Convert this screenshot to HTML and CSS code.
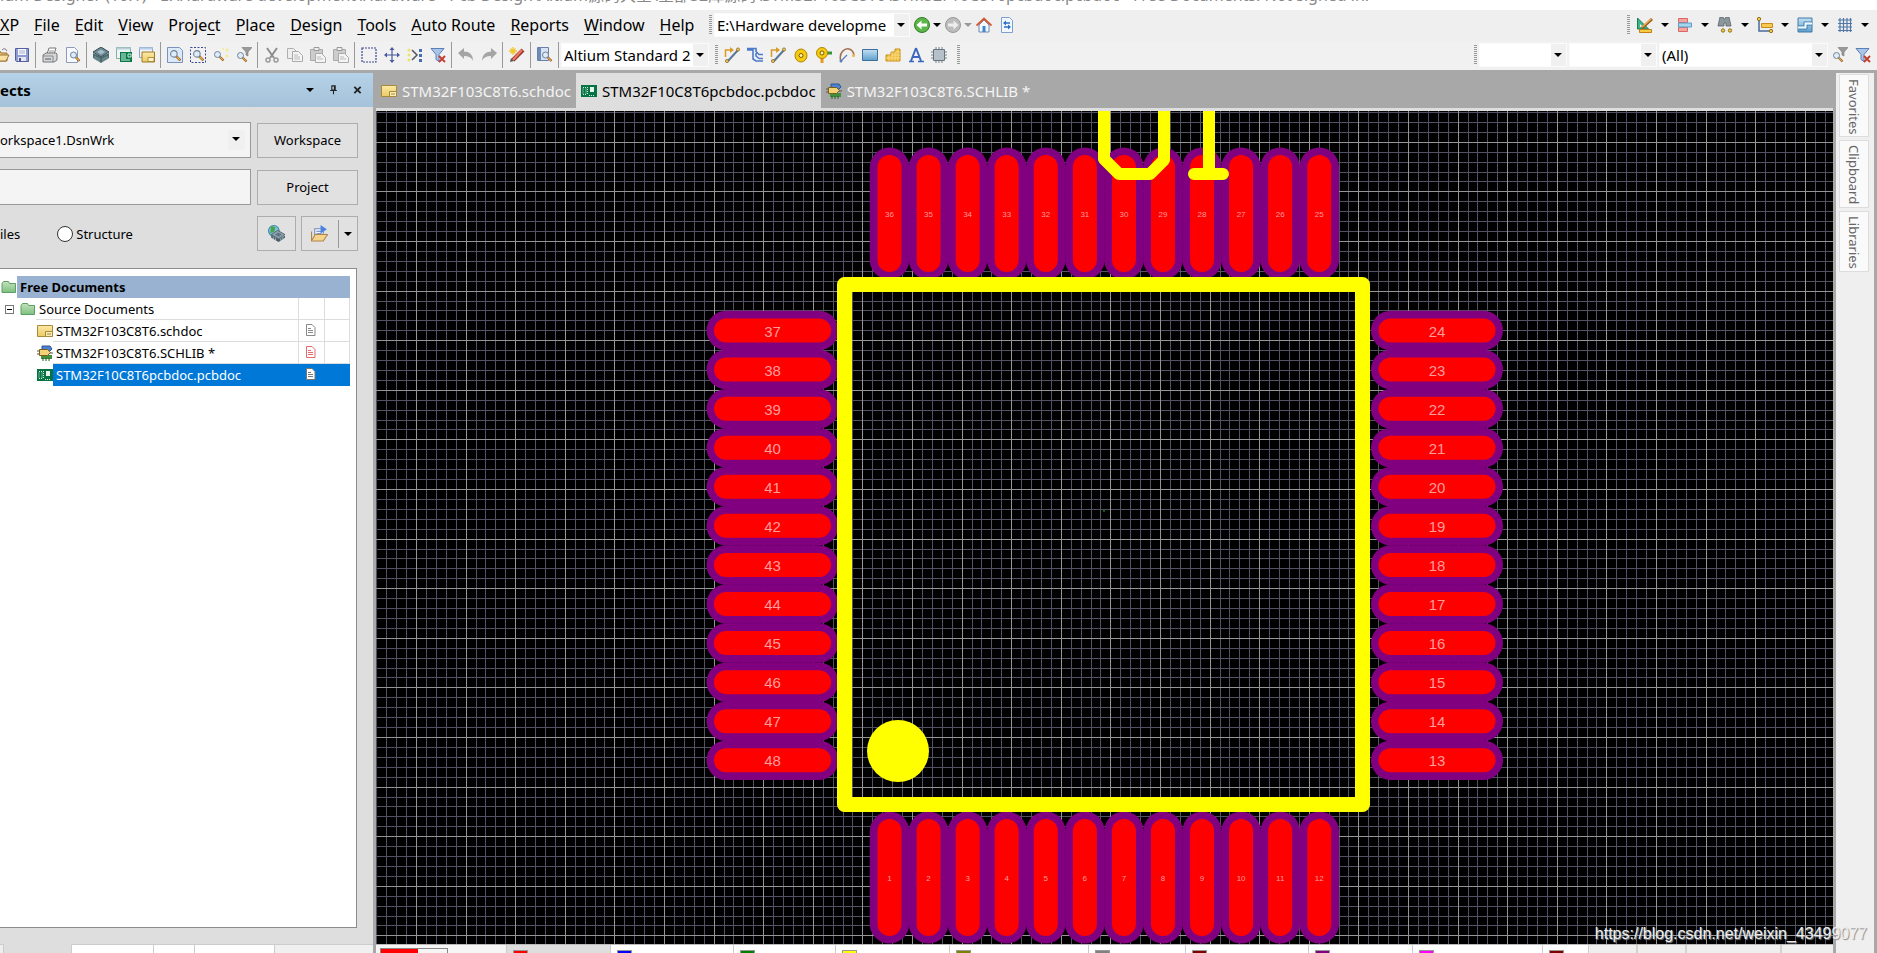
FILE: index.html
```html
<!DOCTYPE html>
<html lang="en">
<head>
<meta charset="utf-8">
<title>Altium Designer</title>
<link rel="stylesheet" href="styles.css">
</head>
<body>
<svg class="defs" aria-hidden="true">
  <defs>
    <linearGradient id="gy" x1="0" y1="0" x2="0" y2="1"><stop offset="0" stop-color="#fbe9a6"/><stop offset="1" stop-color="#eccb62"/></linearGradient>
    <linearGradient id="gb" x1="0" y1="0" x2="0" y2="1"><stop offset="0" stop-color="#c3e0f2"/><stop offset="1" stop-color="#5d9fcc"/></linearGradient>
    <linearGradient id="gg" x1="0" y1="0" x2="0" y2="1"><stop offset="0" stop-color="#c3e3bd"/><stop offset="1" stop-color="#7dc080"/></linearGradient>
  </defs>
  <symbol id="lens" viewBox="0 0 16 16"><path d="M9 9l5 5" stroke="#8a5a1e" stroke-width="3"/><path d="M9.500 9.500l4 4" stroke="#f2b04c" stroke-width="1.500"/><circle cx="6" cy="6" r="4" fill="#dcecfa" stroke="#6f7f92" stroke-width="1.300"/></symbol>
  <symbol id="open" viewBox="0 0 16 16"><path d="M1 14V4h5l1 2h6v8z" fill="#e9c374" stroke="#9c7436"/><path d="M1 14l3-6h11l-3 6z" fill="#fbe2a4" stroke="#9c7436"/><path d="M8 3q3-3 5 1" fill="none" stroke="#777"/></symbol>
  <symbol id="save" viewBox="0 0 16 16"><path d="M1.500 1.500h13v13h-12l-1-1z" fill="#8e9cd0" stroke="#5560a0"/><path d="M4 2h8v6H4z" fill="#f6f7fc"/><path d="M5 4h6M5 6h6" stroke="#a9b0cf"/><path d="M4 10h8v4H4z" fill="#e4e6f2"/><path d="M5 11h2v3H5z" fill="#4b558f"/></symbol>
  <symbol id="print" viewBox="0 0 16 16"><path d="M5 7l2-6h7l-2 6z" fill="#fff" stroke="#777"/><path d="M7 4h5M7 6h4" stroke="#999"/><path d="M1 8l3-2h10l1 1v6l-3 2H1z" fill="#d5d8db" stroke="#777"/><path d="M1 9h10v6" fill="none" stroke="#888"/><path d="M3 12h6" stroke="#555"/></symbol>
  <symbol id="page" viewBox="0 0 16 16"><path d="M1.500.5h8l3 3v12h-11z" fill="#f6f9ff" stroke="#8b9bb8"/></symbol>
  <symbol id="preview" viewBox="0 0 16 16"><use href="#page"/><use href="#lens" x="4" y="3" width="12" height="13"/></symbol>
  <symbol id="stack" viewBox="0 0 16 16"><path d="M0 6l8 4 8-4v5l-8 5-8-5z" fill="#4b6b70"/><path d="M2 9v4M4 10v4M6 11v4M10 11v4M12 10v4M14 9v4" stroke="#9db5b8" stroke-width=".7"/><path d="M0 5l8-5 8 5-8 5z" fill="#6c8896" stroke="#385058"/><path d="M4 5l4-2.500L12 5 8 7.500z" fill="#a6bcc6"/></symbol>
  <symbol id="pcbwin" viewBox="0 0 16 16"><path d="M.5.5h14v11H.5z" fill="#eef5f3" stroke="#8aa"/><path d="M.5.5h14v2H.5z" fill="#b7cfd8"/><path d="M4 5h12v10H4z" fill="#087a4a"/><path d="M5 7h5M5 9h5M5 11h5M12 7h3v3h-3zM5 13h9" stroke="#cfeedd" fill="none"/></symbol>
  <symbol id="schwin" viewBox="0 0 16 16"><path d="M.5.5h13v10H.5z" fill="#eef3fb" stroke="#8ba4c4"/><path d="M.5.5h13v2H.5z" fill="#b8cfe8"/><path d="M3 5h12.500v10H3z" fill="url(#gy)" stroke="#a07c28"/><path d="M9 10.500h6v4H9z" fill="#fff3c4" stroke="#a07c28" stroke-width=".8"/></symbol>
  <symbol id="zdoc" viewBox="0 0 16 16"><path d="M.5.5h12l3 3v12H.5z" fill="#dbe9fa" stroke="#7a93bb"/><use href="#lens" x="2" y="2" width="13" height="13"/></symbol>
  <symbol id="zsel" viewBox="0 0 16 16"><path d="M.5.5h15v15H.5z" fill="none" stroke="#3a4a90" stroke-dasharray="2 1.500"/><use href="#lens" x="2" y="2" width="13" height="13"/></symbol>
  <symbol id="zpts" viewBox="0 0 16 16"><use href="#lens" x="0" y="3" width="12" height="12"/><circle cx="14" cy="3" r="1.500" fill="#f5ec8a"/><circle cx="10" cy="2" r="1" fill="#f5ec8a"/><circle cx="14" cy="9" r="1.500" fill="#f5ec8a"/></symbol>
  <symbol id="zflt" viewBox="0 0 16 16"><use href="#lens" x="0" y="4" width="12" height="12"/><path d="M6 .5h10l-4 4.500v4l-2-1V5z" fill="#999" stroke="#777" stroke-width=".6"/></symbol>
  <symbol id="cut" viewBox="0 0 16 16"><path d="M3 1l7 10M13 1L6 11" stroke="#8d8d8d" stroke-width="2"/><circle cx="4" cy="13" r="2" fill="none" stroke="#999" stroke-width="1.500"/><circle cx="12" cy="13" r="2" fill="none" stroke="#999" stroke-width="1.500"/></symbol>
  <symbol id="copy" viewBox="0 0 16 16"><path d="M.5 1.500h6l3 3v7h-9z" fill="#eee" stroke="#b0b0b0"/><path d="M5.500 4.500h6l4 4v6h-10z" fill="#f4f4f4" stroke="#aaa"/><path d="M7 8h4M7 10h6M7 12h6" stroke="#bbb"/></symbol>
  <symbol id="paste" viewBox="0 0 16 16"><path d="M.5 2.500h12v11H.5z" fill="#ccc" stroke="#aaa"/><path d="M4 .5h5v3H4z" fill="#eee" stroke="#999"/><path d="M5.500 6.500h6l4 4v5h-10z" fill="#f4f4f4" stroke="#aaa"/><path d="M7 10h4M7 12h6" stroke="#bbb"/></symbol>
  <symbol id="marq" viewBox="0 0 16 16"><path d="M1 1h14v14H1z" fill="none" stroke="#3a4a90" stroke-width="1.200" stroke-dasharray="2 1"/></symbol>
  <symbol id="move" viewBox="0 0 16 16"><path d="M8 2v12M2 8h12" stroke="#46589c" stroke-width="1.200"/><path d="M8 0l2.500 3h-5zM8 16l2.500-3h-5zM0 8l3-2.500v5zM16 8l-3-2.500v5z" fill="#46589c"/></symbol>
  <symbol id="desel" viewBox="0 0 16 16"><path d="M5 3l5 5-5 5" fill="none" stroke="#555" stroke-width="1.500"/><path d="M12 2h3v3h-3zM12 7h3v3h-3zM12 12h3v3h-3z" fill="#4b6cb0"/><circle cx="2" cy="3" r="1.500" fill="#eee36a"/><circle cx="2" cy="8" r="1.500" fill="#eee36a"/><circle cx="2" cy="13" r="1.500" fill="#eee36a"/></symbol>
  <symbol id="clrf" viewBox="0 0 16 16"><path d="M1 1.500h13L9 7.500v7l-3-2v-5z" fill="#a9c6ea" stroke="#5c7fb6"/><path d="M9 9l6 6M15 9l-6 6" stroke="#c6392e" stroke-width="1.800"/></symbol>
  <symbol id="undo" viewBox="0 0 16 16"><path d="M0 6l6-5v3.500q9 0 9 9.500-2-5-9-5V12z" fill="#a5a5a5"/></symbol>
  <symbol id="redo" viewBox="0 0 16 16"><path d="M16 6l-6-5v3.500Q1 5 1 14q2-5 9-5V12z" fill="#a5a5a5"/></symbol>
  <symbol id="wand" viewBox="0 0 16 16"><path d="M4 13L14 3" stroke="#9e3328" stroke-width="4"/><path d="M4 13L13 3" stroke="#ea7d67" stroke-width="2"/><path d="M1 15l4-1-3-3z" fill="#555"/><path d="M4 0v8M0 4h8M1.500 1.500l5 5M6.500 1.500l-5 5" stroke="#f0c82e" stroke-width="1.300"/></symbol>
  <symbol id="browse" viewBox="0 0 16 16"><path d="M.5.5h11v13H.5z" fill="#d7e3f4" stroke="#6a80a8"/><path d="M1 1h3v12H1z" fill="#6f8cb8"/><use href="#lens" x="4" y="3" width="12" height="13"/></symbol>
  <symbol id="trk" viewBox="0 0 16 16"><path d="M1.500 10V3h5" fill="none" stroke="#d99a28" stroke-width="1.500"/><path d="M6 0l4 3-4 3z" fill="#d99a28"/><path d="M4 14L14 3" stroke="#5b7796" stroke-width="2"/><circle cx="14" cy="2.500" r="1.600" fill="#efc255" stroke="#75601e" stroke-width=".7"/><circle cx="3" cy="14" r="1.600" fill="#efc255" stroke="#75601e" stroke-width=".7"/></symbol>
  <symbol id="diff" viewBox="0 0 16 16"><path d="M0 3h6v9l3 2h7M0 1.500h9v3l3 3h4M9 6v3l3 2.500h4" fill="none" stroke="#4d7bca" stroke-width="1.600"/></symbol>
  <symbol id="padic" viewBox="0 0 16 16"><ellipse cx="8" cy="8.500" rx="6" ry="6.500" fill="#f5cb12" stroke="#b08600"/><circle cx="8" cy="8.500" r="2" fill="#fdf2b0" stroke="#7a5c00"/></symbol>
  <symbol id="via" viewBox="0 0 16 16"><path d="M6 9v7" stroke="#e89820" stroke-width="3"/><path d="M10 6h6" stroke="#37923a" stroke-width="3"/><circle cx="6" cy="6" r="5.500" fill="#f5cb12" stroke="#b08600"/><circle cx="6" cy="6" r="2" fill="#fff3b0" stroke="#7a5c00"/></symbol>
  <symbol id="arc" viewBox="0 0 16 16"><path d="M1.500 13C0 5 6 1 10 2q4 1 5 6" fill="none" stroke="#a56f52" stroke-width="1.500"/><path d="M2 14L8 8" stroke="#5b7ec0" stroke-width="1.300"/><circle cx="14.500" cy="8.500" r="1.500" fill="#e8b84a"/><circle cx="2" cy="14" r="1.500" fill="#5b7ec0"/></symbol>
  <symbol id="fillic" viewBox="0 0 16 16"><path d="M.5 2.500h15v11H.5z" fill="url(#gb)" stroke="#3c6f9c"/></symbol>
  <symbol id="poly" viewBox="0 0 16 16"><path d="M1 14V8h5V5h4V2h5v12z" fill="#efbf3c" stroke="#c78d14"/><path d="M1 11h14M6 8h9M10 5h5M4 8v6M7 5v9M10 5v9M13 2v12" stroke="#fbe39a" stroke-width=".7"/></symbol>
  <symbol id="txt" viewBox="0 0 16 16"><path d="M8 1l5 13M8 1L3 14M5 10h6" stroke="#3d66c0" stroke-width="2" fill="none"/><path d="M1 14.500h5M10 14.500h6" stroke="#3d66c0" stroke-width="1.500"/></symbol>
  <symbol id="comp" viewBox="0 0 16 16"><path d="M5 0v16M8 0v16M11 0v16M0 5h16M0 8h16M0 11h16" stroke="#76848e"/><path d="M2.500 2.500h11v11h-11z" fill="#b5c0c8" stroke="#66747e"/></symbol>
  <symbol id="back" viewBox="0 0 16 16"><circle cx="8" cy="8" r="7.500" fill="#5cb548" stroke="#2f7d26"/><path d="M2.500 8l5-4.500v3h5.500v3H7.500v3z" fill="#fff"/></symbol>
  <symbol id="fwd" viewBox="0 0 16 16"><circle cx="8" cy="8" r="7.500" fill="#bcbcbc" stroke="#999"/><path d="M13.500 8l-5-4.500v3H3v3h5.500v3z" fill="#eee"/></symbol>
  <symbol id="home" viewBox="0 0 16 16"><path d="M3 8v7h10V8L8 3z" fill="#f5f7fc" stroke="#6f88ac"/><path d="M6.500 9h3v6h-3z" fill="#3f86cf"/><path d="M.5 8.500L8 1.500l7.500 7" fill="none" stroke="#d6592f" stroke-width="1.800"/></symbol>
  <symbol id="sync" viewBox="0 0 16 16"><path d="M2.500.5h8l3 3v12h-11z" fill="#f3f8ff" stroke="#7ea0cc"/><path d="M5 6h6M5 10h6" stroke="#2a6fc4" stroke-width="1.500"/><path d="M7 3.500L4 6l3 2.500zM9 7.500l3 2.500-3 2.500z" fill="#2a6fc4"/></symbol>
  <symbol id="tools" viewBox="0 0 16 16"><path d="M.5 1v11h11z" fill="#40b58a" stroke="#187a56"/><path d="M3 7v3h3z" fill="#f1f1f1"/><path d="M5 11l10-9" stroke="#9b5a17" stroke-width="3"/><path d="M5 10l9-8" stroke="#efb458" stroke-width="1.500"/><path d="M2.500 12.500h12v3h-12z" fill="#f6cb48" stroke="#c27f16"/></symbol>
  <symbol id="align" viewBox="0 0 16 16"><path d="M1.500 1.500h9v4h-9zM1.500 10.500h9v4h-9z" fill="#f7a3a0" stroke="#d66866"/><path d="M1.500 6h13v4h-13z" fill="#a7d4ee" stroke="#5a9dc8"/></symbol>
  <symbol id="bino" viewBox="0 0 16 16"><path d="M3 0h3l1 2h1l1-2h3l2 9H9V6H7v3H1z" fill="#8c979d" stroke="#586268" stroke-width=".8"/><circle cx="6" cy="13.500" r="1.700" fill="#f3c945" stroke="#8e7120"/><circle cx="13" cy="13.500" r="1.700" fill="#f3c945" stroke="#8e7120"/></symbol>
  <symbol id="dim" viewBox="0 0 16 16"><path d="M2 3v11h12" fill="none" stroke="#496b9c" stroke-width="1.500"/><path d="M4.500 6.500h11v4h-11z" fill="#f7c94c" stroke="#c98a1a"/><circle cx="2" cy="2" r="1.700" fill="#f3c945" stroke="#8e7120"/><circle cx="14" cy="14" r="1.700" fill="#f3c945" stroke="#8e7120"/></symbol>
  <symbol id="room" viewBox="0 0 16 16"><path d="M1 1h14v14H1z" fill="url(#gb)" stroke="#3f7baa"/><path d="M1 9h6V5h8M1 12h9V8h5" stroke="#3f7baa" fill="none"/><path d="M1 10.500h7.500V6.500H15" stroke="#eef7fc" fill="none" stroke-width="1.800"/></symbol>
  <symbol id="gridic" viewBox="0 0 16 16"><path d="M3 1v14M6.500 1v14M10 1v14M13.500 1v14M1 3h14M1 6.500h14M1 10h14M1 13.500h14" stroke="#4f78a8" stroke-width="1.200"/></symbol>
  <symbol id="sch" viewBox="0 0 16 16"><path d="M.5 2.500h15v11H.5z" fill="url(#gy)" stroke="#a88a3c"/><path d="M8.500 8.500h7v5h-7z" fill="#fbecb4" stroke="#a88a3c"/><path d="M10 11h4" stroke="#a88a3c"/></symbol>
  <symbol id="pcb" viewBox="0 0 16 16"><path d="M0 2h16v12H0z" fill="#067345"/><path d="M2 4.500h3v7H2z" fill="none" stroke="#cfeedd" stroke-dasharray="1 1"/><path d="M6.500 4v7M8 12.500h6" stroke="#cfeedd" stroke-dasharray="1 1"/><path d="M9 4h4v5H9z" fill="#e6f5ec"/></symbol>
  <symbol id="lib" viewBox="0 0 16 16"><path d="M5 1h8l2 3-3 3H5z" fill="#4c83cc" stroke="#2b559a"/><path d="M4 10h11v4H4z" fill="#3f8f3c"/><path d="M6 13v3M9 13v3M12 13v3" stroke="#245f22"/><path d="M2.500 4.500h8l3 3-3 3h-8z" fill="#f1d276" stroke="#7a5e1a"/><path d="M0 6h2M0 9h2M13 8h3" stroke="#555"/></symbol>
  <symbol id="fold" viewBox="0 0 16 16"><path d="M1 13.500v-9l1.500-2h5l1 2h6v9z" fill="url(#gg)" stroke="#5f9e63"/></symbol>
  <symbol id="doc" viewBox="0 0 12 14"><path d="M1.500 1.500h5.500l3 3v8h-8.500z" fill="#fff" stroke="currentColor"/><path d="M3 5.500h3M3 7.500h5M3 9.500h5" stroke="currentColor"/></symbol>
  <symbol id="globe" viewBox="0 0 16 16"><circle cx="5.500" cy="5.500" r="5" fill="#7ec7df" stroke="#3a87a5"/><path d="M3 1l4 1-1 4-4 2z" fill="#4ba24a"/><path d="M3 9l6-4 7 4-6 4z" fill="#8fa3ae" stroke="#3f545e" stroke-width=".7"/><path d="M6.500 9l3-2 3.500 2-3 2z" fill="#5f7682"/><path d="M3 10v2l7 4 6-4v-2l-6 3z" fill="#4a5f69"/><path d="M5 11.500v2M7 12.500v2M12 12.500v2M14 11.500v2" stroke="#c9d5da" stroke-width=".7"/></symbol>
  <symbol id="expl" viewBox="0 0 16 16"><path d="M3.500 3.500h8v8h-8z" fill="#f3f7ff" stroke="#6f8bbd"/><path d="M5 6h5M5 8h5" stroke="#7e97c3"/><path d="M9 0l6 4-6 4z" fill="#4c83df"/><path d="M.5 6v9h11l4-6H4l-3 5" fill="#f5d48c" stroke="#b1854a"/></symbol>
  <symbol id="pin" viewBox="0 0 10 12"><path d="M3 1h4v5H3zM1 6.500h8M5 7v4" fill="none" stroke="#222" stroke-width="1.300"/><path d="M5.500 1H7v5H5.500z" fill="#222"/></symbol>
  <symbol id="x" viewBox="0 0 10 10"><path d="M1.500 1.500l7 7M8.500 1.500l-7 7" stroke="#222" stroke-width="2"/></symbol>
</svg>

<header class="titlebar"><h1 class="titlebar-text">ium Designer (16.1) - E:\Hardware development\Hardware - Pcb Design\Altium源码大全\全部32库源码\STM32F103C8T6\STM32F10C8T6pcbdoc.pcbdoc - Free Documents. Not signed in.</h1></header>

<div class="bar menu-bar">
  <nav class="menu">
    <button><u>X</u>P</button><button><u>F</u>ile</button><button><u>E</u>dit</button><button><u>V</u>iew</button><button>Proje<u>c</u>t</button><button><u>P</u>lace</button><button><u>D</u>esign</button><button><u>T</u>ools</button><button><u>A</u>uto Route</button><button><u>R</u>eports</button><button><u>W</u>indow</button><button><u>H</u>elp</button>
  </nav>
  <i class="grip"></i>
  <span class="combo combo-path"><select aria-label="Path"><option>E:\Hardware developme</option></select></span>
  <button class="tool" aria-label="Back"><svg><use href="#back"/></svg></button><button class="drop" aria-label="Back history"></button>
  <button class="tool" aria-label="Forward"><svg><use href="#fwd"/></svg></button><button class="drop drop-off" aria-label="Forward history"></button>
  <button class="tool" aria-label="Home"><svg><use href="#home"/></svg></button>
  <button class="tool" aria-label="Refresh"><svg><use href="#sync"/></svg></button>
  <div class="bar-end utility">
    <i class="grip"></i>
    <button class="tool" aria-label="Utilities"><svg><use href="#tools"/></svg></button><button class="drop" aria-label="More utilities"></button>
    <button class="tool" aria-label="Align"><svg><use href="#align"/></svg></button><button class="drop" aria-label="More alignment"></button>
    <button class="tool" aria-label="Find"><svg><use href="#bino"/></svg></button><button class="drop" aria-label="More find"></button>
    <button class="tool" aria-label="Dimension"><svg><use href="#dim"/></svg></button><button class="drop" aria-label="More dimensions"></button>
    <button class="tool" aria-label="Rooms"><svg><use href="#room"/></svg></button><button class="drop" aria-label="More rooms"></button>
    <button class="tool" aria-label="Grid"><svg><use href="#gridic"/></svg></button><button class="drop" aria-label="More grids"></button>
  </div>
</div>

<div class="bar tool-bar">
  <button class="tool tool-cut" aria-label="Open"><svg><use href="#open"/></svg></button>
  <button class="tool" aria-label="Save"><svg><use href="#save"/></svg></button><i class="sep"></i>
  <button class="tool" aria-label="Print"><svg><use href="#print"/></svg></button>
  <button class="tool" aria-label="Preview"><svg><use href="#preview"/></svg></button><i class="sep"></i>
  <button class="tool" aria-label="Devices"><svg><use href="#stack"/></svg></button>
  <button class="tool" aria-label="PCB view"><svg><use href="#pcbwin"/></svg></button>
  <button class="tool" aria-label="Schematic view"><svg><use href="#schwin"/></svg></button><i class="sep"></i>
  <button class="tool" aria-label="Fit document"><svg><use href="#zdoc"/></svg></button>
  <button class="tool" aria-label="Zoom area"><svg><use href="#zsel"/></svg></button>
  <button class="tool" aria-label="Zoom selected"><svg><use href="#zpts"/></svg></button>
  <button class="tool" aria-label="Zoom filtered"><svg><use href="#zflt"/></svg></button><i class="sep"></i>
  <button class="tool" aria-label="Cut"><svg><use href="#cut"/></svg></button>
  <button class="tool" aria-label="Copy"><svg><use href="#copy"/></svg></button>
  <button class="tool" aria-label="Paste"><svg><use href="#paste"/></svg></button>
  <button class="tool" aria-label="Rubber stamp"><svg><use href="#paste"/></svg></button><i class="sep"></i>
  <button class="tool" aria-label="Select area"><svg><use href="#marq"/></svg></button>
  <button class="tool" aria-label="Move"><svg><use href="#move"/></svg></button>
  <button class="tool" aria-label="Deselect"><svg><use href="#desel"/></svg></button>
  <button class="tool" aria-label="Clear filter"><svg><use href="#clrf"/></svg></button><i class="sep"></i>
  <button class="tool" aria-label="Undo"><svg><use href="#undo"/></svg></button>
  <button class="tool" aria-label="Redo"><svg><use href="#redo"/></svg></button><i class="sep"></i>
  <button class="tool" aria-label="Cross probe"><svg><use href="#wand"/></svg></button><i class="sep"></i>
  <button class="tool" aria-label="Browse"><svg><use href="#browse"/></svg></button><i class="sep"></i>
  <span class="combo combo-std"><select aria-label="View configuration"><option>Altium Standard 2D</option></select></span>
  <i class="grip"></i>
  <button class="tool" aria-label="Route"><svg><use href="#trk"/></svg></button>
  <button class="tool" aria-label="Differential pair"><svg><use href="#diff"/></svg></button>
  <button class="tool" aria-label="Multi route"><svg><use href="#trk"/></svg></button>
  <button class="tool" aria-label="Pad"><svg><use href="#padic"/></svg></button>
  <button class="tool" aria-label="Via"><svg><use href="#via"/></svg></button>
  <button class="tool" aria-label="Arc"><svg><use href="#arc"/></svg></button>
  <button class="tool" aria-label="Fill"><svg><use href="#fillic"/></svg></button>
  <button class="tool" aria-label="Polygon"><svg><use href="#poly"/></svg></button>
  <button class="tool" aria-label="String"><svg><use href="#txt"/></svg></button>
  <button class="tool" aria-label="Component"><svg><use href="#comp"/></svg></button>
  <i class="grip grip-last"></i>
  <div class="bar-end filters">
    <i class="grip"></i>
    <span class="combo combo-small"><select aria-label="Net"><option></option></select></span>
    <span class="combo combo-small"><select aria-label="Part"><option></option></select></span>
    <span class="combo combo-all"><select aria-label="Filter"><option>(All)</option></select></span>
    <button class="tool" aria-label="Apply filter"><svg><use href="#zflt"/></svg></button>
    <button class="tool" aria-label="Clear"><svg><use href="#clrf"/></svg></button>
  </div>
</div>

<div class="work">
  <aside class="panel">
    <div class="panel-head"><h2>ects</h2>
      <button class="drop" aria-label="Panel menu"></button>
      <button class="head-btn" aria-label="Pin"><svg class="pin"><use href="#pin"/></svg></button>
      <button class="head-btn" aria-label="Close"><svg class="close"><use href="#x"/></svg></button>
    </div>
    <div class="panel-body">
      <div class="form">
        <span class="combo combo-ws"><select aria-label="Workspace file"><option>orkspace1.DsnWrk</option></select></span>
        <button class="push">Workspace</button>
        <input class="field" type="text" aria-label="Project file">
        <button class="push">Project</button>
        <div class="radios"><span class="files">iles</span><label><input type="radio" name="view">Structure</label></div>
        <div class="pair">
          <button class="push push-icon" aria-label="Vault"><svg><use href="#globe"/></svg></button>
          <button class="push push-split" aria-label="Explore"><svg><use href="#expl"/></svg><i></i><b></b></button>
        </div>
      </div>
      <ul class="tree">
        <li class="row root"><svg><use href="#fold"/></svg><span class="name">Free Documents</span></li>
        <li class="row lvl1"><i class="minus"></i><svg><use href="#fold"/></svg><span class="name">Source Documents</span><span class="c1"></span><span class="c2"></span></li>
        <li class="row lvl2"><svg><use href="#sch"/></svg><span class="name">STM32F103C8T6.schdoc</span><span class="c1"><svg><use href="#doc"/></svg></span><span class="c2"></span></li>
        <li class="row lvl2"><svg><use href="#lib"/></svg><span class="name">STM32F103C8T6.SCHLIB *</span><span class="c1 changed"><svg><use href="#doc"/></svg></span><span class="c2"></span></li>
        <li class="row lvl2 picked"><svg><use href="#pcb"/></svg><span class="name">STM32F10C8T6pcbdoc.pcbdoc</span><span class="c1"><svg><use href="#doc"/></svg></span><span class="c2"></span></li>
      </ul>
      <div class="panel-tabs"><i class="pt-a"></i><i class="pt-gap"></i><i class="pt-b"></i><i class="pt-c"></i><i class="pt-d"></i><i class="pt-rest"></i></div>
    </div>
  </aside>

  <main class="editor">
    <div class="tabs">
      <button class="tab"><svg><use href="#sch"/></svg>STM32F103C8T6.schdoc</button>
      <button class="tab active"><svg><use href="#pcb"/></svg>STM32F10C8T6pcbdoc.pcbdoc</button>
      <button class="tab"><svg><use href="#lib"/></svg>STM32F103C8T6.SCHLIB *</button>
    </div>
    <svg class="board" id="board"></svg>
    <div class="layers" id="layer-strip"></div>
  </main>

  <nav class="rail"><button>Favorites</button><button>Clipboard</button><button>Libraries</button></nav>
  <p class="mark">https://blog.csdn.net/weixin_43499077</p>
</div>
<script src="board.js"></script>
</body>
</html>
```
FILE: styles.css
```css
* { box-sizing: border-box; }
body { margin: 0; height: 100vh; overflow: hidden; display: flex; flex-direction: column; background: #a8a8a8; color: #000; font: 16px/20px "Noto Sans", "Noto Sans CJK SC", sans-serif; }
button, select, input { font: inherit; color: inherit; margin: 0; padding: 0; border: 0; background: none; border-radius: 0; }
.defs { position: absolute; width: 0; height: 0; }

.titlebar { flex: none; height: 10px; background: #fff; overflow: hidden; display: flex; align-items: flex-end; }
.titlebar-text { margin: 0; padding-bottom: 5px; font-size: 16px; line-height: 20px; font-weight: 400; color: #888; white-space: nowrap; }

.bar { flex: none; display: flex; align-items: center; background: #efefef; padding-bottom: 1px; }
.menu-bar { height: 31px; }
.tool-bar { height: 29px; background: #f1f1f1; }
.bar-end { margin-left: auto; display: flex; align-items: center; }
.menu { display: flex; gap: 15px; width: 709px; }
.menu button { white-space: nowrap; }
.menu u { text-underline-offset: 3px; }
.grip { flex: none; width: 3px; height: 20px; background: repeating-linear-gradient(#999 0 1px, transparent 1px 2px); margin-right: 2px; }
.sep { flex: none; width: 1px; height: 26px; background: #999; margin: 0 2px; }
.tool { flex: none; width: 23px; height: 24px; display: grid; place-items: center; }
.tool svg { width: 16px; height: 16px; }
.tool-cut { width: 10px; justify-content: end; }
.drop { flex: none; width: 8px; height: 20px; display: grid; place-items: center; }
.drop::after { content: ""; border: 4px solid transparent; border-top: 4px solid #000; border-bottom: 0; }
.drop-off::after { border-top-color: #999; }

.combo { position: relative; flex: none; display: block; height: 24px; background: #fff; border: 1px solid #fbfbfb; }
.combo select { display: block; width: 100%; height: 100%; appearance: none; padding: 0 17px 0 2px; overflow: hidden; font-size: 15px; }
.combo::after { content: ""; position: absolute; right: 0; top: 0; bottom: 0; width: 15px; background: #f0f0f0; pointer-events: none; }
.combo::before { content: ""; position: absolute; z-index: 1; right: 4px; top: 9px; border: 4px solid transparent; border-top: 4px solid #000; border-bottom: 0; pointer-events: none; }
.combo-path { width: 196px; }
.combo-std { width: 148px; margin-right: 6px; }
.combo-small { width: 88px; margin-right: 2px; }
.combo-all { width: 169px; }
.utility .tool { width: 25px; }
.utility .drop { width: 15px; }
.utility { padding-right: 5px; }
.filters { padding-right: 3px; }
.grip-last { margin-left: 7px; }

.work { flex: 1; min-height: 0; display: flex; padding-top: 3px; position: relative; }
.panel { flex: none; width: 373px; display: flex; flex-direction: column; background: #dedede; }
.panel-head { flex: none; height: 34px; display: flex; align-items: center; padding-right: 11px; gap: 14px; background: linear-gradient(#b5d2e8, #a4c2d9); }
.panel-head h2 { margin: 0 auto 0 0; font-size: 15px; line-height: 20px; }
.head-btn { width: 10px; height: 20px; display: grid; place-items: center; }
.head-btn svg { width: 9px; height: 10px; }
.panel-body { flex: 1; min-height: 0; display: flex; flex-direction: column; font-size: 13px; }
.form { flex: none; display: grid; grid-template-columns: 251px 101px; column-gap: 6px; row-gap: 11px; padding-top: 15px; align-items: center; }
.combo-ws, .field { height: 36px; background: #f4f4f4; border: 1px solid #999; border-left: 0; }
.combo-ws select { font-size: 13px; padding-left: 0; }
.combo-ws::before { right: 10px; top: 14px; }
.combo-ws::after { right: 5px; top: 7px; bottom: 7px; width: 17px; }
.push { height: 35px; background: #e1e1e1; border: 1px solid #adadad; display: flex; align-items: center; justify-content: center; }
.push svg { width: 17px; height: 17px; }
.radios { display: flex; align-items: center; gap: 37px; }
.radios label { display: flex; align-items: center; gap: 3px; }
.radios input { appearance: none; width: 16px; height: 16px; border: 1px solid #333; border-radius: 50%; background: #fff; }
.pair { display: flex; gap: 5px; }
.push-icon { width: 39px; }
.push-split { width: 57px; padding-left: 9px; justify-content: flex-start; }
.push-split i { width: 1px; height: 28px; margin: 0 5px 0 10px; background: #999; }
.push-split b { border: 4px solid transparent; border-top: 4px solid #000; border-bottom: 0; }

.tree { flex: 1; margin: 17px 16px 16px 0; padding: 7px 6px 0 0; list-style: none; background: #fff; border: 1px solid #8c8c8c; border-left: 0; }
.row { display: flex; height: 22px; align-items: center; padding-left: 1px; line-height: 22px; }
.row > svg { flex: none; width: 16px; height: 16px; }
.name { flex: 1; height: 22px; padding-left: 3px; white-space: nowrap; border-bottom: 1px solid #ddd; }
.root .name { background: #99b2d1; font-weight: 700; border: 0; }
.lvl1 { padding-left: 5px; }
.lvl1 > svg { margin-left: 6px; }
.lvl2 { padding-left: 37px; }
.minus { width: 9px; height: 9px; border: 1px solid #777; background: linear-gradient(#000, #000) center / 5px 1px no-repeat; }
.c1, .c2 { height: 22px; border-left: 1px solid #ddd; border-bottom: 1px solid #ddd; width: 26px; }
.c2 { border-right: 1px solid #ddd; }
.c1 { color: #888; padding: 3px 6px; }
.c1 svg { display: block; width: 12px; height: 14px; }
.changed { color: #e56a6a; }
.picked .name, .picked .c1, .picked .c2 { background: #0078d7; border-color: #0078d7; color: #fff; }
.picked .c1 { color: #777; }
.panel-tabs { flex: none; height: 9px; display: flex; }
.panel-tabs i { border-top: 1px solid #ccc; border-right: 1px solid #ccc; background: #fff; }
.panel-tabs .pt-a { width: 4px; background: #eee; }
.panel-tabs .pt-gap { width: 68px; background: #dedede; border-top-color: #dedede; }
.pt-b { width: 82px; }
.pt-c { width: 41px; }
.pt-d { width: 80px; }
.panel-tabs .pt-rest { flex: 1; background: #f0f0f0; border-right: 0; }

.editor { flex: 1; min-width: 0; margin-left: 3px; display: flex; flex-direction: column; }
.tabs { flex: none; height: 38px; display: flex; border-bottom: 3px solid #dedede; }
.tab { display: flex; align-items: center; gap: 5px; padding: 0 5px; color: #f4f4f4; white-space: nowrap; font-size: 15px; }
.tab svg { width: 16px; height: 16px; }
.active { background: #dedede; color: #000; }
.board { flex: 1; min-height: 0; width: 100%; display: block; background: #000; }
.layers { flex: none; height: 9px; display: flex; overflow: hidden; background: #fff; border-top: 1px solid #bbb; }
.layer { flex: none; padding: 5px 6px 0; border-right: 1px solid #ccc; }
.swatch { display: block; width: 15px; height: 8px; border: 1px solid #999; border-width: 1px 1px 0; }
.set { background: #f5f5f5; padding: 3px 4px 0; }
.set .swatch { width: 68px; border-color: #888; background: linear-gradient(90deg, #f00 37px, #f5f5f5 37px); }
.current { background: #dedede; }
.status { flex: none; background: #efefef; border-right: 2px solid #d4d4cc; }
.status:last-child { flex: 1; border: 0; }

.rail { flex: none; width: 38px; margin: 0 3px; padding: 1px 5px 0 3px; background: #efefef; display: flex; flex-direction: column; gap: 3px; }
.rail button { writing-mode: vertical-rl; width: 30px; padding: 4px 0 2px; text-align: left; background: #fafafa; border: 1px solid #ddd; color: #666; font-size: 13px; line-height: 20px; }
.mark { position: absolute; right: 10px; bottom: 9px; margin: 0; font: 16px/20px "Liberation Sans", Arial, sans-serif; color: #eee; text-shadow: 1px 1px 1px #888; }

.pad { fill: #f00; }
.halo { fill: #800080; }
.silk { fill: none; stroke: #ff0; stroke-width: 12px; stroke-linecap: round; stroke-linejoin: round; }
.outline { stroke-width: 15px; }
.dot { fill: #ff0; }
.origin { fill: #0a5a0a; }
.minor { stroke: #525263; fill: none; shape-rendering: crispEdges; }
.major { stroke: #969696; fill: none; shape-rendering: crispEdges; }
.num { fill: #ff9c9c; font: 15px "Liberation Sans", Arial, sans-serif; text-anchor: middle; }
.num-small { font-size: 8px; }
```
FILE: board.js
```js
const NS = 'http://www.w3.org/2000/svg';
const board = document.getElementById('board');
function add(tag, attrs, text) {
  const el = document.createElementNS(NS, tag);
  for (const k in attrs) el.setAttribute(k, attrs[k]);
  if (text) el.textContent = text;
  board.appendChild(el);
}

// Grid: every fifth line is a major one.
const STEP = 49.6 / 5;
function gridPath(major) {
  let d = '';
  for (let i = -70; i < 400; i++) {
    if ((i % 5 === 0) !== major) continue;
    const x = Math.floor(685.3 + i * STEP) + 0.5;
    const y = Math.floor(31.3 + i * STEP) + 0.5;
    if (x > 0) d += `M${x} 0V3000`;
    if (y > 0) d += `M0 ${y}H4000`;
  }
  return d;
}
add('path', { class: 'minor', d: gridPath(false) });
add('path', { class: 'major', d: gridPath(true) });

// Pads: four rows of twelve.
const PITCH = 39.07;
const pads = [];
for (let i = 0; i < 12; i++) {
  const x = 513.5 + i * PITCH, y = 219.5 + i * PITCH;
  pads.push({ x, y: 102.5, n: 36 - i, tall: true });
  pads.push({ x, y: 766.5, n: i + 1, tall: true });
  pads.push({ x: 396.5, y, n: 37 + i });
  pads.push({ x: 1061, y, n: 24 - i });
}
function capsule(p, long, short, cls) {
  const w = p.tall ? short : long, h = p.tall ? long : short;
  add('rect', { class: cls, x: p.x - w / 2, y: p.y - h / 2, width: w, height: h, rx: short / 2 });
}
pads.forEach(p => capsule(p, 132, 39.5, 'halo'));
pads.forEach(p => capsule(p, 117, 24, 'pad'));
pads.forEach(p => add('text', { class: p.tall ? 'num num-small' : 'num', x: p.x, y: p.y + (p.tall ? 3 : 6) }, String(p.n)));

// Silkscreen
add('rect', { class: 'silk outline', x: 468.5, y: 173.5, width: 518, height: 520 });
add('circle', { class: 'dot', cx: 522, cy: 640, r: 31 });
add('path', { class: 'silk', d: 'M728 -10V48L743 63H774L788 49V-10' });
add('path', { class: 'silk', d: 'M833 -10V63M818 63H847' });
add('rect', { class: 'origin', x: 727, y: 399, width: 2, height: 2 });

// Layer strip: class, width and swatch colour of each cell; status cells have no swatch.
const strip = document.getElementById('layer-strip');
const cells = [
  ['layer set', 131, ''], ['layer current', 104, '#f00'], ['layer', 123, '#00f'], ['layer', 102, '#008000'],
  ['layer', 114, '#ff0'], ['layer', 139, '#808000'], ['layer', 97, '#808080'], ['layer', 123, '#800000'],
  ['layer', 104, '#800080'], ['layer', 130, '#f0f'], ['layer', 46, '#800000'],
  ['status', 49], ['status', 49], ['status', 95], ['status']
];
for (const [cls, width, color] of cells) {
  const cell = document.createElement('span');
  cell.className = cls;
  if (width) cell.style.width = width + 'px';
  if (color !== undefined) {
    const s = document.createElement('i');
    s.className = 'swatch';
    if (color) s.style.background = color;
    cell.appendChild(s);
  }
  strip.appendChild(cell);
}
```
